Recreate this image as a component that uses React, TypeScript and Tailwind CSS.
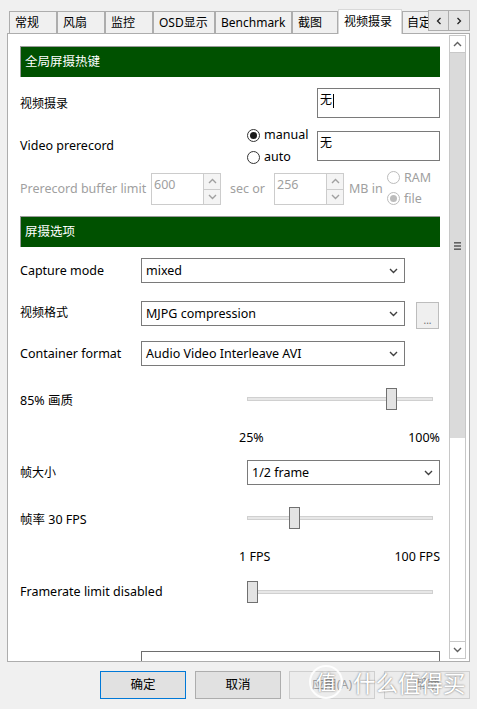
import React from "react";

const tabs = [
  { label: "常规", w: "w-[48px]" },
  { label: "风扇", w: "w-[48px]" },
  { label: "监控", w: "w-[48px]" },
  { label: "OSD显示", w: "w-[62px]" },
  { label: "Benchmark", w: "w-[77px]" },
  { label: "截图", w: "w-[46px]" },
];

const ChevronDown = ({ color = "#404040" }: { color?: string }) => (
  <svg width="9" height="6" viewBox="0 0 9 6">
    <path d="M1 1l3.5 3.5L8 1" fill="none" stroke={color} strokeWidth="1.4" />
  </svg>
);

const ChevronUp = ({ color = "#404040" }: { color?: string }) => (
  <svg width="9" height="6" viewBox="0 0 9 6">
    <path d="M1 5l3.5-3.5L8 5" fill="none" stroke={color} strokeWidth="1.4" />
  </svg>
);

const Header = ({ title }: { title: string }) => (
  <div className="flex items-center h-[31px] w-[420px] bg-[#005100] border-t border-l border-[#9a9a9a] pl-[4px] text-white">
    {title}
  </div>
);

const Select = ({ value, w }: { value: string; w: string }) => (
  <div
    className={`flex items-center justify-between h-[25px] ${w} border border-[#7a7a7a] bg-white pl-[4px] pr-[6px]`}
  >
    <span>{value}</span>
    <ChevronDown />
  </div>
);

const TextBox = ({ caret }: { caret?: boolean }) => (
  <div className="flex items-start h-[30px] w-[123px] border border-[#7a7a7a] bg-white pl-[2px] pt-[3px]">
    <span className="text-[12px] leading-[16px]">无</span>
    {caret && <span className="w-px h-[14px] bg-black ml-px mt-[2px]" />}
  </div>
);

const Radio = ({
  label,
  checked,
  disabled,
}: {
  label: string;
  checked?: boolean;
  disabled?: boolean;
}) => (
  <div className={`flex items-center h-[22px] ${disabled ? "text-[#a0a0a0]" : ""}`}>
    <span
      className={`flex items-center justify-center w-[13px] h-[13px] rounded-full border bg-white ${
        disabled ? "border-[#bcbcbc]" : "border-[#333333]"
      }`}
    >
      {checked && (
        <span
          className={`w-[7px] h-[7px] rounded-full ${disabled ? "bg-[#bcbcbc]" : "bg-[#1a1a1a]"}`}
        />
      )}
    </span>
    <span className="ml-[4px]">{label}</span>
  </div>
);

const SpinBox = ({ value }: { value: string }) => (
  <div className="flex h-[32px] w-[70px] border border-[#cccccc] bg-white">
    <span className="flex-1 pl-[2px] pt-[3px] leading-[16px] text-[#a0a0a0]">{value}</span>
    <div className="flex flex-col w-[17px] border-l border-[#cccccc]">
      <div className="flex flex-1 items-center justify-center bg-[#f4f4f4] border-b border-[#cccccc]">
        <ChevronUp color="#a0a0a0" />
      </div>
      <div className="flex flex-1 items-center justify-center bg-[#f4f4f4]">
        <ChevronDown color="#a0a0a0" />
      </div>
    </div>
  </div>
);

const Slider = ({ thumb }: { thumb: string }) => (
  <div className="relative w-[186px] h-[22px]">
    <div className="absolute left-0 right-0 top-[9px] h-[4px] bg-[#e7e7e7] border border-[#d0d0d0]" />
    <div className={`absolute top-0 ${thumb} w-[11px] h-[22px] bg-[#e3e3e3] border border-[#707070]`} />
  </div>
);

const Button = ({
  label,
  kind,
  ml,
}: {
  label: string;
  kind: "default" | "normal" | "disabled";
  ml: string;
}) => {
  const look =
    kind === "default"
      ? "bg-[#e1e1e1] border-[#0078d7] text-black"
      : kind === "normal"
        ? "bg-[#e1e1e1] border-[#adadad] text-black"
        : "bg-[#ececec] border-[#cfcfcf] text-[#a0a0a0]";
  return (
    <div className={`flex items-center justify-center w-[86px] h-[28px] border ${look} ${ml}`}>
      {label}
    </div>
  );
};

export default function App() {
  return (
    <div className="relative w-[477px] h-[709px] overflow-hidden bg-[#f0f0f0] text-[12.5px] leading-[18px] text-black font-['Noto_Sans','Noto_Sans_CJK_SC',sans-serif]">
      {/* tab strip */}
      <div className="relative z-10 flex h-[34px] pl-[9px]">
        <div className="flex items-end w-[419px] overflow-hidden">
          {tabs.map((t) => (
            <div
              key={t.label}
              className={`flex items-center shrink-0 ${t.w} h-[23px] border border-[#adadad] bg-[#f0f0f0] pl-[5px] text-[12px]`}
            >
              {t.label}
            </div>
          ))}
          <div className="flex items-center shrink-0 w-[64px] h-[25px] border border-b-0 border-[#d9d9d9] bg-white pl-[5px] text-[12px]">
            视频摄录
          </div>
          <div className="flex items-center shrink-0 w-[50px] h-[23px] border border-[#adadad] bg-[#f0f0f0] pl-[4px] text-[12px]">
            自定义
          </div>
        </div>
        <div className="flex self-start mt-[10px]">
          <div className="flex items-center justify-center w-[21px] h-[21px] border border-[#adadad] bg-[#e5e5e5]">
            <svg width="6" height="8" viewBox="0 0 6 8">
              <path d="M4.5 1L1.5 4l3 3" fill="none" stroke="#222" strokeWidth="1.3" />
            </svg>
          </div>
          <div className="flex items-center justify-center w-[21px] h-[21px] border border-l-0 border-[#adadad] bg-[#e5e5e5]">
            <svg width="6" height="8" viewBox="0 0 6 8">
              <path d="M1.5 1l3 3-3 3" fill="none" stroke="#222" strokeWidth="1.3" />
            </svg>
          </div>
        </div>
      </div>

      {/* panel */}
      <div className="flex -mt-px ml-[7px] w-[463px] h-[629px] border border-[#adadad] bg-white">
        <div className="flex flex-col w-[441px] h-[627px] overflow-hidden pl-[12px] pr-[9px]">
          <div className="mt-[12px]">
            <Header title="全局屏摄热键" />
          </div>

          <div className="flex items-center justify-between h-[30px] mt-[11px]">
            <span className="text-[12px] pt-[2px]">视频摄录</span>
            <TextBox caret />
          </div>

          <div className="flex items-center h-[44px] mt-[6px]">
            <span className="w-[227px]">Video prerecord</span>
            <div className="flex flex-col w-[70px]">
              <Radio label="manual" checked />
              <Radio label="auto" />
            </div>
            <TextBox />
          </div>

          <div className="flex items-center h-[32px] mt-[5px] text-[#a0a0a0]">
            <span className="w-[131px]">Prerecord buffer limit</span>
            <SpinBox value="600" />
            <span className="w-[53px] pl-[9px]">sec or</span>
            <SpinBox value="256" />
            <span className="w-[43px] pl-[5px]">MB in</span>
            <div className="flex flex-col -mt-[2px]">
              <div className="h-[21px] flex items-center">
                <Radio label="RAM" disabled />
              </div>
              <div className="h-[21px] flex items-center">
                <Radio label="file" checked disabled />
              </div>
            </div>
          </div>

          <div className="mt-[11px]">
            <Header title="屏摄选项" />
          </div>

          <div className="flex items-center h-[25px] mt-[11px]">
            <span className="w-[121px]">Capture mode</span>
            <Select value="mixed" w="w-[264px]" />
          </div>

          <div className="flex items-start h-[28px] mt-[18px]">
            <span className="w-[121px] pt-[3px] text-[12px]">视频格式</span>
            <div className="h-[26px] flex">
              <Select value="MJPG compression" w="w-[264px]" />
            </div>
            <div className="flex items-end justify-center w-[23px] h-[27px] mt-px ml-[11px] border border-[#bdbdbd] bg-[#efefef] text-[10px] leading-[16px] text-[#6d6d6d]">
              ...
            </div>
          </div>

          <div className="flex items-center h-[25px] mt-[12px]">
            <span className="w-[121px]">Container format</span>
            <Select value="Audio Video Interleave AVI" w="w-[264px]" />
          </div>

          <div className="flex items-center h-[22px] mt-[22px]">
            <span className="w-[227px] pt-[4px]">85% 画质</span>
            <Slider thumb="left-[139px]" />
          </div>

          <div className="flex items-center justify-between h-[16px] mt-[20px] pl-[219px]">
            <span>25%</span>
            <span>100%</span>
          </div>

          <div className="flex items-center h-[25px] mt-[14px]">
            <span className="w-[227px] text-[12px]">帧大小</span>
            <Select value="1/2 frame" w="w-[193px]" />
          </div>

          <div className="flex items-center h-[22px] mt-[22px]">
            <span className="w-[227px] pt-[3px]">帧率 30 FPS</span>
            <Slider thumb="left-[42px]" />
          </div>

          <div className="flex items-center justify-between h-[16px] mt-[20px] pl-[219px]">
            <span>1 FPS</span>
            <span>100 FPS</span>
          </div>

          <div className="flex items-center h-[22px] mt-[16px]">
            <span className="w-[227px]">Framerate limit disabled</span>
            <Slider thumb="left-0" />
          </div>

          <div className="shrink-0 ml-[121px] mt-[48px] w-[299px] h-[40px] border border-b-0 border-[#6e6e6e]" />
        </div>

        {/* scrollbar */}
        <div className="flex flex-col w-[17px] mt-px mb-[2px] border border-[#c8c8c8]">
          <div className="flex items-center justify-center h-[17px] bg-white border-b border-[#c8c8c8]">
            <ChevronUp color="#606060" />
          </div>
          <div className="flex items-center justify-center h-[385px] bg-[#dadada]">
            <svg width="7" height="8" viewBox="0 0 7 8">
              <rect x="0" y="0" width="7" height="1.6" fill="#606060" />
              <rect x="0" y="3.2" width="7" height="1.6" fill="#606060" />
              <rect x="0" y="6.4" width="7" height="1.6" fill="#606060" />
            </svg>
          </div>
          <div className="flex-1 bg-white" />
          <div className="flex items-center justify-center h-[17px] bg-white border-t border-[#c8c8c8]">
            <ChevronDown color="#606060" />
          </div>
        </div>
      </div>

      {/* dialog buttons */}
      <div className="flex mt-[9px] pl-[100px]">
        <Button label="确定" kind="default" ml="ml-0" />
        <Button label="取消" kind="normal" ml="ml-[9px]" />
        <Button label="应用(A)" kind="disabled" ml="ml-[8px]" />
        <Button label="帮助" kind="disabled" ml="ml-[9px]" />
      </div>

      {/* watermark */}
      <div className="absolute left-[309px] top-[665px] flex items-center text-white [text-shadow:0_0_2px_rgba(0,0,0,0.6)] pointer-events-none">
        <div className="flex items-center justify-center w-[34px] h-[34px] rounded-full border-2 border-white/90 text-[20px] font-['Noto_Sans_CJK_SC',sans-serif]">
          值
        </div>
        <span className="ml-[10px] text-[22.5px] leading-[30px] font-['Noto_Sans_CJK_SC',sans-serif]">
          什么值得买
        </span>
      </div>
    </div>
  );
}
